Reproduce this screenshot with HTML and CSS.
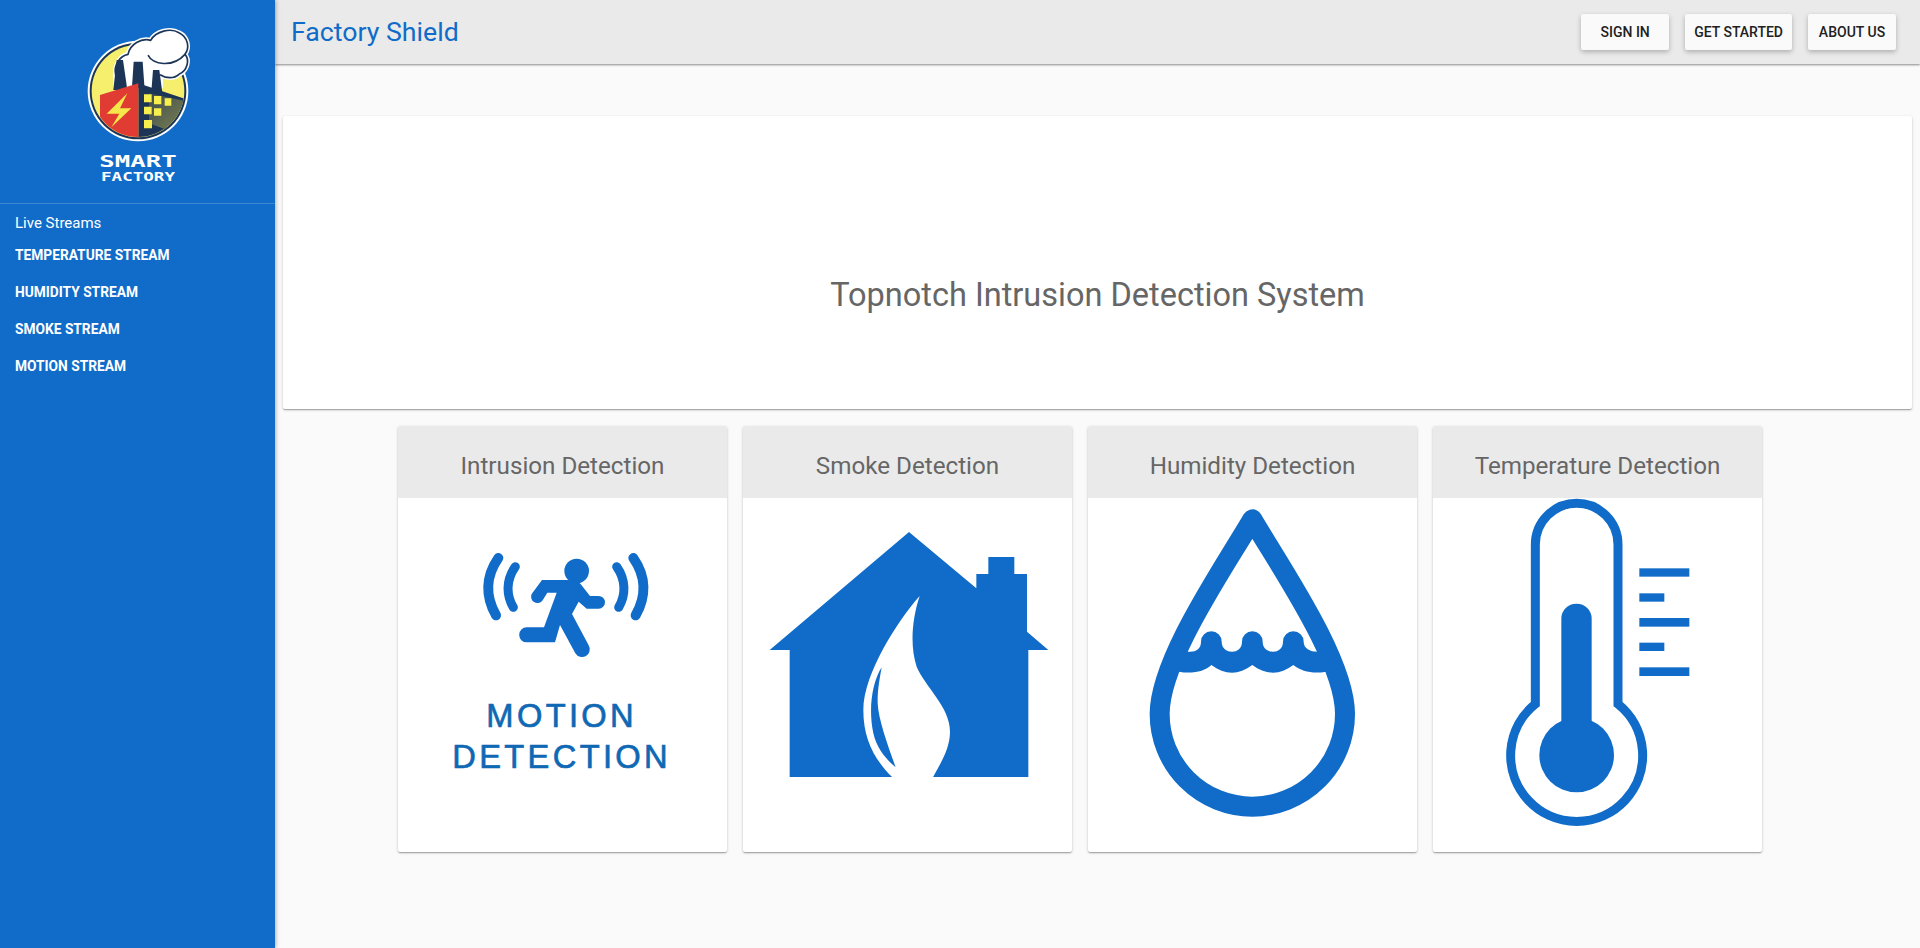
FILE: index.html
```html
<!DOCTYPE html>
<html lang="en">
<head>
  <meta charset="UTF-8" />
  <meta name="viewport" content="width=device-width, initial-scale=1.0"/>
  <title>Factory Shield</title>
  <link rel="stylesheet" href="styles.css">
</head>
<body>
  <aside class="sidebar">
    <div class="brand">
      <svg class="logo" viewBox="7 0 390 525" width="130" height="175">
        <defs>
          <clipPath id="inner-disc"><circle cx="202" cy="228" r="138"/></clipPath>
          <linearGradient id="wall" x1="0" y1="0" x2="1" y2="1">
            <stop offset="0" stop-color="#3d4a4a"/>
            <stop offset="1" stop-color="#7d8255"/>
          </linearGradient>
        </defs>
        <circle cx="202" cy="228" r="151" fill="#fff"/>
        <circle cx="202" cy="228" r="145" fill="#1c3557"/>
        <circle cx="202" cy="228" r="139" fill="#f6ef6e"/>
        <!-- smoke sits behind the chimneys -->
        <path d="M135 195C128 150 148 122 172 118C178 88 212 68 240 76C256 48 300 38 325 53C352 66 358 98 343 118C358 134 350 168 325 178C310 192 285 190 270 180L270 215H135Z" fill="#fff" stroke="#fff" stroke-width="14" stroke-linejoin="round"/>
        <path d="M135 180C128 150 148 122 172 118C178 88 212 68 240 76C256 48 300 38 325 53C352 66 358 98 343 118C358 134 350 168 325 178C310 192 285 190 270 180" fill="#fff" stroke="#1c3557" stroke-width="5" stroke-linecap="round"/>
        <path d="M233 122C245 148 305 160 343 118" fill="none" stroke="#1c3557" stroke-width="5" stroke-linecap="round"/>
        <path d="M135 215H270V190H135Z" fill="#fff"/>
        <path d="M128 225 138 135H157L170 225ZM184 215 189 140H216L222 225ZM242 230 247 165H266L276 240Z" fill="#1c3557"/>
        <g clip-path="url(#inner-disc)">
          <path d="M203 205 345 252V400H203Z" fill="#1c3557"/>
          <path d="M235 235 345 258V345L290 345 235 325Z" fill="url(#wall)"/>
          <path d="M88 240 203 205V380H88Z" fill="#e03c33"/>
        </g>
        <path d="M170 235 108 296H146L122 337 182 280H148Z" fill="#f6e84a"/>
        <path d="M220 238H243V262H220ZM250 243H272V268H250ZM282 250H302V272H282ZM220 275H243V298H220ZM250 280H272V302H250ZM220 315H244V340H220Z" fill="#f6ef4e"/>
        <text class="logo-big" x="202" y="455" text-anchor="middle" textLength="232" lengthAdjust="spacingAndGlyphs">SMART</text>
        <text class="logo-small" x="202" y="497" text-anchor="middle" textLength="222" lengthAdjust="spacingAndGlyphs">FACTORY</text>
      </svg>
    </div>
    <nav class="side-nav">
      <div class="side-title">Live Streams</div>
      <a class="side-link">Temperature Stream</a>
      <a class="side-link">Humidity Stream</a>
      <a class="side-link">Smoke Stream</a>
      <a class="side-link">Motion Stream</a>
    </nav>
  </aside>

  <div class="content">
    <header class="toolbar">
      <span class="app-name">Factory Shield</span>
      <div class="actions">
        <button class="btn">Sign in</button>
        <button class="btn">Get started</button>
        <button class="btn">About us</button>
      </div>
    </header>

    <main class="main">
      <section class="hero">Topnotch Intrusion Detection System</section>

      <section class="cards">
        <article class="card">
          <h2 class="card-title">Intrusion Detection</h2>
          <svg class="card-art" viewBox="24 234 987 1062">
            <g class="motion-arcs">
              <path d="M325 414C286 470 286 530 318 586"/>
              <path class="arc-inner" d="M376 440C348 480 348 525 370 562"/>
              <path d="M730 414C769 470 769 530 737 586"/>
              <path class="arc-inner" d="M680 440C708 480 708 525 686 562"/>
            </g>
            <circle cx="560" cy="453" r="37" class="fill"/>
            <path class="fill" d="M456 480H535L570 490 600 528H626A19 19 0 0 1 626 566H590L566 545 546 582 596 676A23 23 0 0 1 556 700L510 615 495 667H410A22.5 22.5 0 0 1 410 622H462L500 518H472L457 542A19 19 0 0 1 425 522Z"/>
            <text class="motion-text" x="515" y="920" text-anchor="middle">MOTION</text>
            <text class="motion-text" x="515" y="1043" text-anchor="middle">DETECTION</text>
          </svg>
        </article>

        <article class="card">
          <h2 class="card-title">Smoke Detection</h2>
          <svg class="card-art" viewBox="24 234 987 1062">
            <path class="fill" d="M522 336 724 505V462H760V411H838V462H876V635L940 690H880V1071H164V690H104Z"/>
            <path fill="#fff" d="M554 528C530 600 525 680 545 740C570 800 645 860 645 935C645 990 610 1040 594 1072H472C420 1020 385 960 385 870C385 760 490 600 554 528Z"/>
            <path class="fill" d="M440 742C410 790 400 870 415 940C425 985 455 1020 482 1042C460 980 430 900 428 850C427 810 435 770 440 742Z"/>
          </svg>
        </article>

        <article class="card">
          <h2 class="card-title">Humidity Detection</h2>
          <svg class="card-art" viewBox="24 234 987 1062">
            <path class="drop" d="M517 298C600 440 795 720 795 882A278 278 0 0 1 239 882C239 720 434 440 517 298Z"/>
            <path class="fill" d="M290 695H330C350 695 363 685 363 665A31 31 0 0 1 425 665C425 685 440 695 456 695C472 695 486 685 486 665A31 31 0 0 1 548 665C548 685 563 695 579 695C595 695 609 685 609 665A31 31 0 0 1 671 665C671 685 690 695 712 695H745L738 755C700 762 665 755 640 735C620 750 600 758 579 758C558 758 537 750 517 735C497 750 476 758 456 758C435 758 414 750 394 735C374 755 335 762 297 755Z"/>
          </svg>
        </article>

        <article class="card">
          <h2 class="card-title">Temperature Detection</h2>
          <svg class="card-art" viewBox="24 234 987 1062">
            <path class="tube" d="M331 374A124 124 0 0 1 579 374V852A198 198 0 1 1 331 852Z"/>
            <circle class="fill" cx="455" cy="1005" r="112"/>
            <rect class="fill" x="409" y="551" width="91" height="420" rx="45"/>
            <rect class="fill" x="643" y="445" width="150" height="25"/>
            <rect class="fill" x="643" y="520" width="75" height="25"/>
            <rect class="fill" x="643" y="594" width="150" height="26"/>
            <rect class="fill" x="643" y="668" width="75" height="25"/>
            <rect class="fill" x="643" y="742" width="150" height="26"/>
          </svg>
        </article>
      </section>
    </main>
  </div>
</body>
</html>
```

FILE: styles.css
```css
body {
  margin: 0;
  height: 100vh;
  overflow: hidden;
  display: flex;
  font-family: Roboto, Arial, sans-serif;
  background: #fafafa;
  color: #666;
}

/* sidebar */
.sidebar {
  width: 275px;
  flex-shrink: 0;
  background: #106cc8;
  color: white;
  box-shadow: 1px 0 4px rgba(0,0,0,0.3);
  position: relative;
  z-index: 2;
}
.brand {
  height: 188px;
  padding-top: 15px;
  border-bottom: 1px solid rgba(255,255,255,0.2);
  text-align: center;
}
.logo {
  display: block;
  margin: 0 auto;
}
.logo-big, .logo-small {
  font-family: "DejaVu Sans Mono", monospace;
  font-weight: bold;
  fill: white;
}
.logo-big {
  font-size: 50px;
}
.logo-small {
  font-size: 36px;
}
.side-nav {
  padding: 9px 15px;
}
.side-title {
  font-size: 15px;
  line-height: 20px;
  margin-bottom: 4px;
}
.side-link {
  display: block;
  font-size: 13.75px;
  font-weight: 700;
  line-height: 37px;
  text-transform: uppercase;
}

/* top bar */
.content {
  flex: 1;
  min-width: 0;
  display: flex;
  flex-direction: column;
}
.toolbar {
  height: 64px;
  flex-shrink: 0;
  display: flex;
  align-items: center;
  justify-content: space-between;
  padding: 0 24px 0 16px;
  background: #eaeaea;
  box-shadow: 0 1px 2px rgba(0,0,0,0.45);
  position: relative;
}
.app-name {
  font-size: 26.7px;
  color: #106cc8;
}
.actions {
  display: flex;
  gap: 16px;
}
.btn {
  min-width: 88px;
  height: 36px;
  padding: 0 9px;
  border: 0;
  border-radius: 2px;
  background: #fafafa;
  color: #212121;
  font-family: Roboto, Arial, sans-serif;
  font-size: 14px;
  font-weight: 500;
  text-transform: uppercase;
  box-shadow: 0 2px 5px rgba(0,0,0,0.26);
}

/* main area */
.main {
  flex: 1;
  padding: 52px 8px 0;
}
.hero {
  height: 293px;
  box-sizing: border-box;
  padding-top: 64px;
  display: flex;
  align-items: center;
  justify-content: center;
  background: white;
  border-radius: 2px;
  font-size: 32.5px;
  box-shadow: 0 1px 3px rgba(0,0,0,0.2), 0 1px 1px rgba(0,0,0,0.14), 0 2px 1px -1px rgba(0,0,0,0.12);
}
.cards {
  margin-top: 17px;
  padding-right: 35px;
  display: flex;
  justify-content: center;
  gap: 16px;
}
.card {
  width: 329px;
  height: 426px;
  background: white;
  border-radius: 2px;
  overflow: hidden;
  box-shadow: 0 1px 3px rgba(0,0,0,0.2), 0 1px 1px rgba(0,0,0,0.14), 0 2px 1px -1px rgba(0,0,0,0.12);
}
.card-title {
  margin: 0;
  height: 72px;
  line-height: 80px;
  text-align: center;
  font-size: 24.2px;
  font-weight: 400;
  background: #eaeaea;
}
.card-art {
  display: block;
  width: 329px;
  height: 354px;
}

/* icon paints */
.fill {
  fill: #106cc8;
}
.motion-arcs path {
  fill: none;
  stroke: #106cc8;
  stroke-width: 30;
  stroke-linecap: round;
}
.motion-arcs .arc-inner {
  stroke-width: 27;
}
.motion-text {
  font-family: "Liberation Sans", Arial, sans-serif;
  font-size: 98px;
  letter-spacing: 10px;
  fill: #0f68b4;
  stroke: #0f68b4;
  stroke-width: 2px;
}
.drop {
  fill: none;
  stroke: #106cc8;
  stroke-width: 60;
  stroke-linejoin: round;
}
.tube {
  fill: none;
  stroke: #106cc8;
  stroke-width: 27;
}
```
